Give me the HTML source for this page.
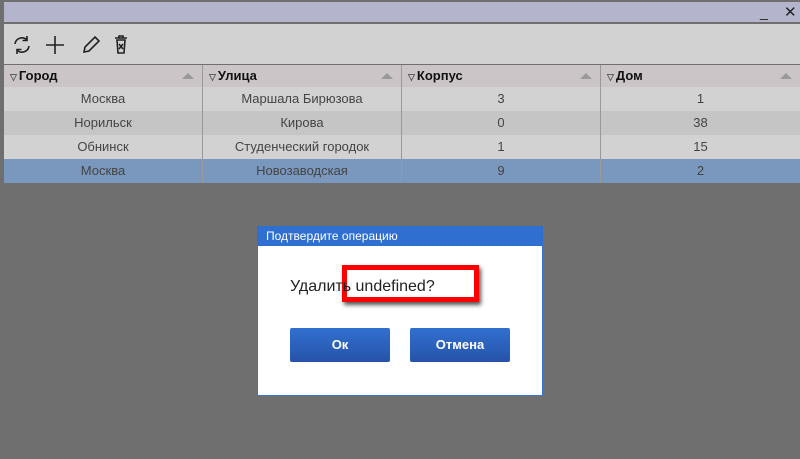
<!DOCTYPE html>
<html><head><meta charset="utf-8"><style>
body{margin:0;width:800px;height:459px;background:#6f6f6f;font-family:"Liberation Sans",sans-serif;position:relative;overflow:hidden}
.a{position:absolute}
.title{left:4px;top:2px;width:796px;height:20px;background:#b4b4cc}
.tb{left:4px;top:24px;width:796px;height:40px;background:#d2d2d2}
.hdr{top:65px;height:22px;background:#cbc5c8;font-weight:bold;font-size:13px;color:#111;line-height:22px;border-right:1px solid #999;box-sizing:border-box}
.hdr span{font-size:9px;color:#555;margin:0 2px 0 6px}
.hdr i{position:absolute;right:8px;top:8px;width:0;height:0;border-left:6px solid transparent;border-right:6px solid transparent;border-bottom:6px solid #999}
.c{height:24px;line-height:24px;text-align:center;font-size:13px;color:#444;border-right:1px solid #999;box-sizing:border-box}
.btn{top:328px;width:100px;height:34px;background:linear-gradient(#3170d0,#2653a8);color:#fff;font-weight:bold;font-size:13px;line-height:34px;text-align:center;border-radius:2px}
</style></head><body>
<div class="a title"></div>
<div class="a" style="left:760px;top:4px;font-size:14px;color:#222">_</div>
<div class="a" style="left:784px;top:3px;font-size:15px;color:#222">✕</div>
<div class="a tb"></div>
<svg class="a" style="left:12px;top:34px" width="120" height="22" fill="none" stroke="#222" stroke-width="1.6">
<path d="M3 10a7 7 0 0 1 12-4M17 12a7 7 0 0 1-12 4M15 2v4.5h-4.5M5 20v-4.5h4.5"/>
<path d="M43 2v18M34 11h18"/>
<path d="M72 18l1-5 10-10 4 4-10 10z"/>
<path d="M103 4h12M107 4v-2h4v2M105 6h8l-1 13h-6zM107 10l4 5M111 10l-4 5"/>
</svg>
<div class="a hdr" style="left:4px;width:199px"><span>▽</span>Город<i></i></div>
<div class="a hdr" style="left:203px;width:199px"><span>▽</span>Улица<i></i></div>
<div class="a hdr" style="left:402px;width:199px"><span>▽</span>Корпус<i></i></div>
<div class="a hdr" style="left:601px;width:199px;border:0"><span>▽</span>Дом<i></i></div>
<div class="a" style="left:4px;top:87px;width:796px">
<div style="display:flex;background:#d2d2d2"><div class="c" style="width:199px">Москва</div><div class="c" style="width:199px">Маршала Бирюзова</div><div class="c" style="width:199px">3</div><div class="c" style="width:199px;border:0">1</div></div>
<div style="display:flex;background:#c5c5c5"><div class="c" style="width:199px">Норильск</div><div class="c" style="width:199px">Кирова</div><div class="c" style="width:199px">0</div><div class="c" style="width:199px;border:0">38</div></div>
<div style="display:flex;background:#d2d2d2"><div class="c" style="width:199px">Обнинск</div><div class="c" style="width:199px">Студенческий городок</div><div class="c" style="width:199px">1</div><div class="c" style="width:199px;border:0">15</div></div>
<div style="display:flex;background:#7a98bd"><div class="c" style="width:199px">Москва</div><div class="c" style="width:199px">Новозаводская</div><div class="c" style="width:199px">9</div><div class="c" style="width:199px;border:0">2</div></div>
</div>
<div class="a" style="left:257px;top:226px;width:286px;height:170px;background:#fff;border:1px solid #3a74d0;box-sizing:border-box"></div>
<div class="a" style="left:257px;top:226px;width:286px;height:20px;background:#2f6fd0;color:#fff;font-size:12px;line-height:20px;padding-left:9px;box-sizing:border-box">Подтвердите операцию</div>
<div class="a" style="left:342px;top:265px;width:137px;height:37px;border:5px solid #f00;box-sizing:border-box;box-shadow:2px 3px 4px #555"></div>
<div class="a" style="left:290px;top:278px;font-size:16px;color:#222">Удалить undefined?</div>
<div class="a btn" style="left:290px">Ок</div>
<div class="a btn" style="left:410px">Отмена</div>
</body></html>
